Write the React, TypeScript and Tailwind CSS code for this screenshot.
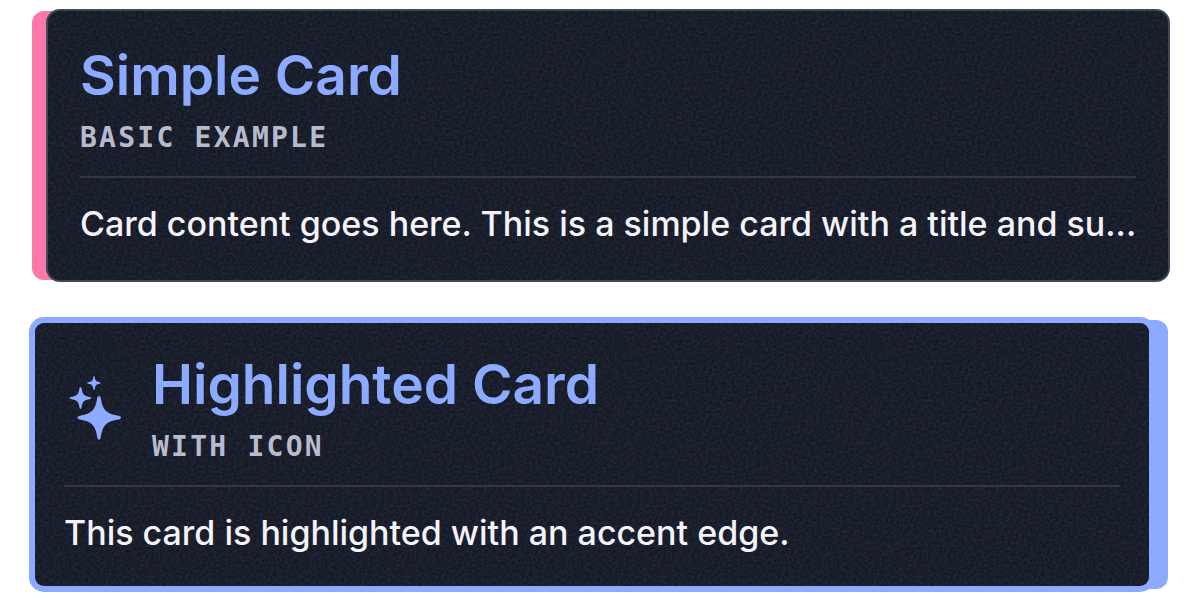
import type { ReactNode } from "react";

function Grain({ id }: { id: string }) {
  return (
    <svg className="absolute inset-0 h-full w-full" aria-hidden="true">
      <defs>
        <filter id={`${id}-noise`} x="0" y="0" width="100%" height="100%" colorInterpolationFilters="sRGB">
          <feTurbulence type="fractalNoise" baseFrequency="0.35" numOctaves="2" stitchTiles="stitch" />
          <feColorMatrix type="matrix" values="0 0 0 0 0.14  0 0 0 0 0.17  0 0 0 0 0.24  2.2 0 0 0 -0.65" />
        </filter>
        <pattern id={`${id}-tile`} width="256" height="256" patternUnits="userSpaceOnUse">
          <rect width="256" height="256" filter={`url(#${id}-noise)`} />
        </pattern>
      </defs>
      <rect width="100%" height="100%" fill={`url(#${id}-tile)`} opacity="0.75" />
    </svg>
  );
}

function Sparkles() {
  return (
    <svg className="h-16 w-14 shrink-0 overflow-visible text-[#8caaff]" viewBox="-4 3 56 64" fill="currentColor" aria-hidden="true">
      <path d="M31 20C32 20 32.8 21 33 23C34.5 33.500 38.500 37.500 48 39.300C51.500 40 53 40.500 53 41.700C53 43 51.500 43.400 48 44C38.500 45.700 34.800 49.500 33 60C32.600 62.500 32 63.800 31 63.800C30 63.800 29.300 62.500 29 60C27.200 49.500 23.500 45.700 14 44C11 43.400 9.500 43 9.500 41.700C9.500 40.500 11 40 14 39.300C23.500 37.500 27.500 33.500 29 23C29.200 21 30 20 31 20Z" />
      <path d="M12.500 11C13.200 11 13.600 12 13.800 13.500C14.500 18 16 19.800 20.500 20.700C22.500 21 23.300 21.500 23.300 22C23.300 22.700 22.500 23 20.500 23.400C16 24.200 14.500 25.800 13.800 30C13.500 32 13.200 33 12.500 33C11.800 33 11.500 32 11.200 30C10.500 25.800 9 24.200 4.500 23.400C2.500 23 1.500 22.700 1.500 22C1.500 21.500 2.500 21 4.500 20.700C9 19.800 10.500 18 11.200 13.500C11.400 12 11.800 11 12.500 11Z" />
      <path d="M26 0C26.700 0 26.800 2 27.200 3.500C27.800 5.300 29 5.700 31 6C32 6.200 32.500 6.500 32.500 7C32.500 7.500 32 7.800 31 8C29 8.300 27.800 9 27.200 11C26.800 12.500 26.700 14 26 14C25.300 14 25.200 12.500 24.800 11C24.200 9 23 8.300 21 8C20 7.800 19 7.500 19 7C19 6.500 20 6.200 21 6C23 5.700 24.200 5.300 24.800 3.500C25.200 2 25.300 0 26 0Z" />
    </svg>
  );
}

type CardProps = {
  id: string;
  title: string;
  subtitle: string;
  icon?: ReactNode;
  highlighted?: boolean;
  children: ReactNode;
};

function Card({ id, title, subtitle, icon, highlighted = false, children }: CardProps) {
  return (
    <article className={highlighted ? "rounded-xl bg-[#8caaff] pr-4" : "rounded-xl bg-[#ff79a8] pl-4"}>
      <div
        className={
          highlighted
            ? "relative rounded-xl bg-[#8caaff] ring-3 ring-[#8caaff]"
            : "relative rounded-xl bg-[#151823] ring-2 ring-[#414655]"
        }
      >
        <div
          className={
            highlighted
              ? "absolute inset-[3px] overflow-hidden rounded-[9px] bg-[#151823]"
              : "absolute inset-0 overflow-hidden rounded-xl"
          }
        >
          <Grain id={id} />
        </div>
        <div className="relative p-8">
          <header className="flex items-center gap-8 border-b-2 border-[#343744] pb-4">
            {icon}
            <div className="min-w-0">
              <h2 className="font-['Inter'] text-[55px] leading-16 font-semibold text-[#8caaff]">{title}</h2>
              <p className="mt-[9px] font-['DejaVu_Sans_Mono'] text-[28px] leading-11 font-bold tracking-[0.08em] text-[#b8bbce] uppercase">
                {subtitle}
              </p>
            </div>
          </header>
          <p className="mt-[22px] font-['Inter'] text-[34px] leading-12 font-medium whitespace-nowrap text-[#f4f3fa]">
            {children}
          </p>
        </div>
      </div>
    </article>
  );
}

export default function App() {
  return (
    <main className="flex flex-col gap-10 bg-white px-8 py-[11px]">
      <Card id="simple" title="Simple Card" subtitle="Basic example">
        Card content goes here. This is a simple card with a title and su...
      </Card>
      <Card id="highlighted" title="Highlighted Card" subtitle="With icon" icon={<Sparkles />} highlighted>
        This card is highlighted with an accent edge.
      </Card>
    </main>
  );
}
